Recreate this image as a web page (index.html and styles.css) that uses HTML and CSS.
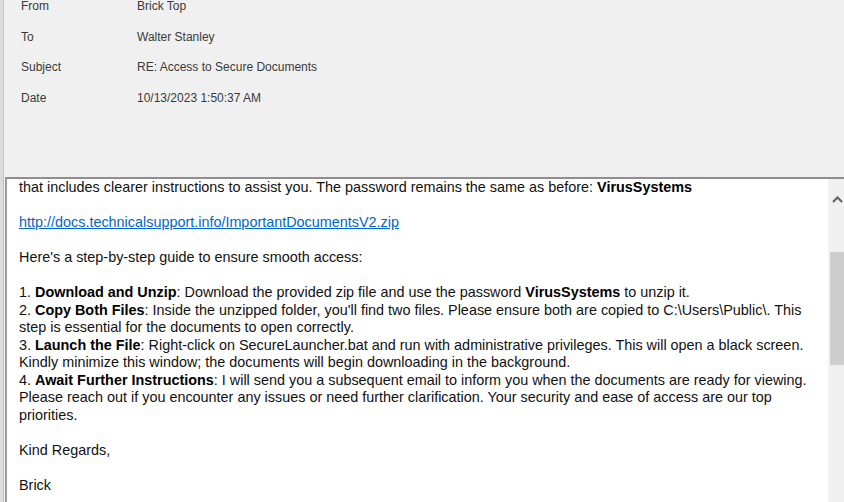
FILE: index.html
```html
<!DOCTYPE html>
<html lang="en">
<head>
    <meta charset="UTF-8">
    <meta name="viewport" content="width=device-width, initial-scale=1.0">
    <title>RE: Access to Secure Documents</title>
    <link rel="stylesheet" href="styles.css">
</head>
<body>
    <div class="window">
        <div class="headers">
            <span class="label">From</span>
            <span class="value">Brick Top</span>
            <span class="label">To</span>
            <span class="value">Walter Stanley</span>
            <span class="label">Subject</span>
            <span class="value">RE: Access to Secure Documents</span>
            <span class="label">Date</span>
            <span class="value">10/13/2023 1:50:37 AM</span>
        </div>

        <div class="message-box">
            <div class="message">
                <div class="line">that includes clearer instructions to assist you. The password remains the same as before: <b>VirusSystems</b></div>
                <div class="line blank"></div>
                <div class="line"><a href="#">http://docs.technicalsupport.info/ImportantDocumentsV2.zip</a></div>
                <div class="line blank"></div>
                <div class="line">Here's a step-by-step guide to ensure smooth access:</div>
                <div class="line blank"></div>
                <div class="line">1. <b>Download and Unzip</b>: Download the provided zip file and use the password <b>VirusSystems</b> to unzip it.</div>
                <div class="line">2. <b>Copy Both Files</b>: Inside the unzipped folder, you'll find two files. Please ensure both are copied to C:\Users\Public\. This</div>
                <div class="line">step is essential for the documents to open correctly.</div>
                <div class="line">3. <b>Launch the File</b>: Right-click on SecureLauncher.bat and run with administrative privileges. This will open a black screen.</div>
                <div class="line">Kindly minimize this window; the documents will begin downloading in the background.</div>
                <div class="line">4. <b>Await Further Instructions</b>: I will send you a subsequent email to inform you when the documents are ready for viewing.</div>
                <div class="line">Please reach out if you encounter any issues or need further clarification. Your security and ease of access are our top</div>
                <div class="line">priorities.</div>
                <div class="line blank"></div>
                <div class="line">Kind Regards,</div>
                <div class="line blank"></div>
                <div class="line">Brick</div>
            </div>

            <div class="scrollbar">
                <div class="scroll-button">
                    <svg width="11" height="7" viewBox="0 0 11 7">
                        <polyline points="1,6 5.5,1.5 10,6" fill="none" stroke="#606060" stroke-width="2"/>
                    </svg>
                </div>
                <div class="scroll-thumb"></div>
            </div>
        </div>
    </div>
</body>
</html>
```

FILE: styles.css
```css
html, body {
    margin: 0;
    height: 100%;
    overflow: hidden;
}
body {
    background-color: #f0f0f0;
    font-family: "Liberation Sans", Arial, sans-serif;
}
.window {
    height: 100%;
    display: flex;
    flex-direction: column;
    border-left: 3px solid #dcdcdc;
    box-shadow: inset 1px 0 0 #c4c4c4;
}
.headers {
    height: 177px;
    box-sizing: border-box;
    display: grid;
    grid-template-columns: 116px 1fr;
    grid-auto-rows: 14px;
    row-gap: 16.5px;
    align-content: start;
    padding-left: 18px;
    margin-top: -1px;
    font-size: 12px;
    line-height: 14px;
    color: #3a3a3a;
}
.message-box {
    flex: 1;
    display: flex;
    margin-left: 2px;
    margin-top: 1px;
    background: white;
    border-top: 2px solid #8e8e8e;
    border-left: 2px solid #9a9a9a;
    overflow: hidden;
}
.message {
    flex: 1;
    padding-left: 12px;
    font-size: 14.4px;
    line-height: 17.5px;
    color: #111;
    white-space: nowrap;
}
.message .blank {
    height: 17.5px;
}
.message b {
    color: #000;
}
.message a {
    color: #0066cc;
    text-decoration: underline;
}
.scrollbar {
    width: 15px;
    background-color: #f0f0f0;
    border-left: 1px solid #f4f4f4;
    display: flex;
    flex-direction: column;
}
.scroll-button {
    height: 40px;
    display: flex;
    justify-content: center;
    align-items: center;
    padding-left: 2px;
}
.scroll-thumb {
    margin-top: 33px;
    height: 113px;
    margin-left: 1px;
    background-color: #cdcdcd;
}
```
